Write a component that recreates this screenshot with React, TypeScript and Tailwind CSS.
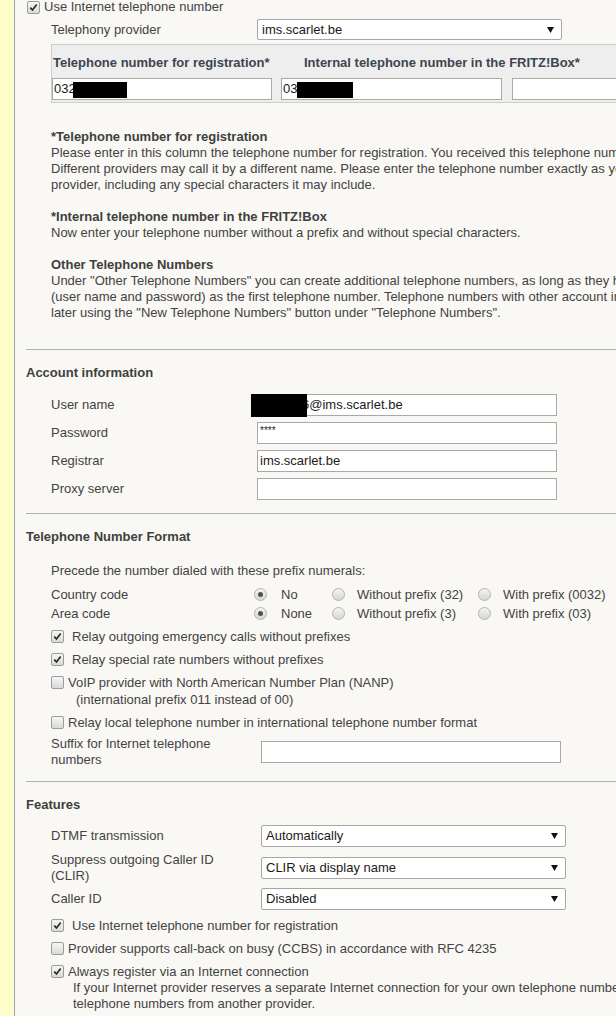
import React from "react";

function Check({ checked }: { checked: boolean }) {
  return (
    <span className="flex w-[13px] h-[13px] shrink-0 items-center justify-center rounded-[2px] border border-[#9c9c9c] bg-linear-to-b from-[#f6f6f6] to-[#d9d9d9]">
      {checked && (
        <svg width="9" height="9" viewBox="0 0 9 9">
          <path d="M1.3 4.6 L3.5 7 L7.7 1.6" stroke="#2a2a2a" strokeWidth="1.7" fill="none" />
        </svg>
      )}
    </span>
  );
}

function Radio({ on }: { on?: boolean }) {
  return (
    <span className="flex w-[13px] h-[13px] shrink-0 items-center justify-center rounded-full border border-[#b4b4b4] bg-linear-to-b from-[#f4f4f4] to-[#d6d6d6]">
      {on && <span className="w-[5px] h-[5px] rounded-full bg-[#505050]" />}
    </span>
  );
}

function Arrow() {
  return (
    <svg width="7" height="6" viewBox="0 0 7 6" className="shrink-0">
      <path d="M0 0 H7 L3.5 6 Z" fill="#111" />
    </svg>
  );
}

function Select({ value, h }: { value: string; h: string }) {
  return (
    <div
      className={`w-[305px] ${h} flex items-center justify-between rounded-[2px] border border-[#a6a6a6] bg-white pl-[4px] pr-[7px] text-[#1a1a1a]`}
    >
      <span>{value}</span>
      <Arrow />
    </div>
  );
}

function CheckRow({
  checked,
  gap,
  children,
}: {
  checked: boolean;
  gap: string;
  children: React.ReactNode;
}) {
  return (
    <div className="ml-[25px] flex items-start py-[3px] leading-[17px]">
      <div className="flex h-[17px] items-center">
        <Check checked={checked} />
      </div>
      <div className={`${gap} leading-[17px]`}>{children}</div>
    </div>
  );
}

export default function App() {
  return (
    <div
      className="flex h-[1016px] w-[616px] overflow-hidden bg-[#f9f8f4] text-[13px] text-[#434343]"
      style={{ fontFamily: '"Liberation Sans", Arial, sans-serif' }}
    >
      <div className="w-[15px] shrink-0 border-r border-[#9aa4ab] bg-[#fefecb]" />
      <div className="w-[820px] shrink-0 pl-[11px]">
        {/* Use Internet telephone number */}
        <div className="ml-[1px] flex h-[14px] items-center gap-[4px]">
          <Check checked />
          <span>Use Internet telephone number</span>
        </div>

        {/* Telephony provider */}
        <div className="ml-[25px] mt-[5px] flex h-[21px] items-center">
          <span className="w-[206px]">Telephony provider</span>
          <Select value="ims.scarlet.be" h="h-[21px]" />
        </div>

        {/* Numbers table */}
        <div className="ml-[25px] mt-[4px] border-b border-l border-t border-[#cdcdcd] bg-[#eeeeee] pb-[2px] pt-[10px]">
          <div className="flex h-[16px] items-center font-bold text-[#3d4550]">
            <span className="w-[252px] pl-[1px]">Telephone number for registration*</span>
            <span>Internal telephone number in the FRITZ!Box*</span>
          </div>
          <div className="mt-[7px] flex h-[22px]">
            <div className="relative flex h-[22px] w-[220px] items-center border border-[#a9a9a9] bg-white pl-[1px] text-[#1a1a1a]">
              032
              <span className="absolute left-[20px] top-[3px] h-[16px] w-[54px] bg-black" />
            </div>
            <div className="relative ml-[9px] flex h-[22px] w-[221px] items-center border border-[#a9a9a9] bg-white pl-[1px] text-[#1a1a1a]">
              03
              <span className="absolute left-[15px] top-[3px] h-[16px] w-[56px] bg-black" />
            </div>
            <div className="ml-[10px] h-[22px] w-[220px] border border-[#a9a9a9] bg-white" />
          </div>
        </div>

        {/* Explanations */}
        <div className="ml-[25px] mt-[26px] leading-[16px] whitespace-nowrap">
          <div className="font-bold text-[#3f3f3f]">*Telephone number for registration</div>
          <div>
            Please enter in this column the telephone number for registration. You received this telephone number from your telephony provider.
          </div>
          <div>
            Different providers may call it by a different name. Please enter the telephone number exactly as you received it from your
          </div>
          <div>provider, including any special characters it may include.</div>
          <div className="mt-[16px] font-bold text-[#3f3f3f]">*Internal telephone number in the FRITZ!Box</div>
          <div>Now enter your telephone number without a prefix and without special characters.</div>
          <div className="mt-[16px] font-bold text-[#3f3f3f]">Other Telephone Numbers</div>
          <div>
            Under "Other Telephone Numbers" you can create additional telephone numbers, as long as they have the same account information
          </div>
          <div>
            (user name and password) as the first telephone number. Telephone numbers with other account information can be configured
          </div>
          <div>later using the "New Telephone Numbers" button under "Telephone Numbers".</div>
        </div>

        <div className="mt-[28px] h-px bg-[#a9b2b8]" />

        {/* Account information */}
        <div className="mt-[15px] font-bold leading-[16px] text-[#3f3f3f]">Account information</div>
        <div className="ml-[25px] mt-[10px]">
          <div className="flex h-[28px] items-center">
            <span className="w-[206px]">User name</span>
            <div className="relative flex h-[22px] w-[300px] items-center border border-[#a9a9a9] bg-white pl-[44px] text-[#1a1a1a]">
              6@ims.scarlet.be
              <span className="absolute left-[-7px] top-[-1px] h-[23px] w-[56px] bg-black" />
            </div>
          </div>
          <div className="flex h-[28px] items-center">
            <span className="w-[206px]">Password</span>
            <div className="h-[22px] w-[300px] border border-[#a9a9a9] bg-white pl-[2px] pt-[3px] text-[10px] leading-[10px] text-[#1a1a1a]">
              ****
            </div>
          </div>
          <div className="flex h-[28px] items-center">
            <span className="w-[206px]">Registrar</span>
            <div className="flex h-[22px] w-[300px] items-center border border-[#a9a9a9] bg-white pl-[2px] text-[#1a1a1a]">
              ims.scarlet.be
            </div>
          </div>
          <div className="flex h-[28px] items-center">
            <span className="w-[206px]">Proxy server</span>
            <div className="h-[22px] w-[300px] border border-[#a9a9a9] bg-white" />
          </div>
        </div>

        <div className="mt-[10px] h-px bg-[#a9b2b8]" />

        {/* Telephone Number Format */}
        <div className="mt-[15px] font-bold leading-[16px] text-[#3f3f3f]">Telephone Number Format</div>
        <div className="ml-[25px] mt-[18px] leading-[16px]">Precede the number dialed with these prefix numerals:</div>
        <div className="mt-[6px]">
          <div className="ml-[25px] flex h-[19px] items-center">
            <span className="w-[203px]">Country code</span>
            <div className="flex w-[78px] items-center gap-[14px]">
              <Radio on />
              <span>No</span>
            </div>
            <div className="flex w-[146px] items-center gap-[12px]">
              <Radio />
              <span>Without prefix (32)</span>
            </div>
            <div className="flex items-center gap-[12px]">
              <Radio />
              <span>With prefix (0032)</span>
            </div>
          </div>
          <div className="ml-[25px] flex h-[19px] items-center">
            <span className="w-[203px]">Area code</span>
            <div className="flex w-[78px] items-center gap-[14px]">
              <Radio on />
              <span>None</span>
            </div>
            <div className="flex w-[146px] items-center gap-[12px]">
              <Radio />
              <span>Without prefix (3)</span>
            </div>
            <div className="flex items-center gap-[12px]">
              <Radio />
              <span>With prefix (03)</span>
            </div>
          </div>
        </div>

        <div className="mt-[2px]">
          <CheckRow checked gap="ml-[8px]">
            Relay outgoing emergency calls without prefixes
          </CheckRow>
          <CheckRow checked gap="ml-[8px]">
            Relay special rate numbers without prefixes
          </CheckRow>
          <CheckRow checked={false} gap="ml-[4px]">
            <div>VoIP provider with North American Number Plan (NANP)</div>
            <div className="pl-[8px]">(international prefix 011 instead of 00)</div>
          </CheckRow>
          <CheckRow checked={false} gap="ml-[4px]">
            Relay local telephone number in international telephone number format
          </CheckRow>
        </div>

        <div className="ml-[25px] mt-[2px] flex items-start">
          <span className="w-[210px] leading-[16px]">
            Suffix for Internet telephone
            <br />
            numbers
          </span>
          <div className="mt-[5px] h-[22px] w-[300px] border border-[#a9a9a9] bg-white" />
        </div>

        <div className="mt-[13px] h-px bg-[#a9b2b8]" />

        {/* Features */}
        <div className="mt-[15px] font-bold leading-[16px] text-[#3f3f3f]">Features</div>
        <div className="ml-[25px] mt-[7px]">
          <div className="flex h-[32px] items-center">
            <span className="w-[210px]">DTMF transmission</span>
            <Select value="Automatically" h="h-[22px]" />
          </div>
          <div className="flex h-[32px] items-center">
            <span className="w-[210px] leading-[16px]">
              Suppress outgoing Caller ID
              <br />
              (CLIR)
            </span>
            <Select value="CLIR via display name" h="h-[22px]" />
          </div>
          <div className="flex h-[30px] items-center">
            <span className="w-[210px]">Caller ID</span>
            <Select value="Disabled" h="h-[22px]" />
          </div>
        </div>

        <CheckRow checked gap="ml-[8px]">
          Use Internet telephone number for registration
        </CheckRow>
        <CheckRow checked={false} gap="ml-[4px]">
          Provider supports call-back on busy (CCBS) in accordance with RFC 4235
        </CheckRow>
        <div className="ml-[25px] flex items-start pt-[3px]">
          <div className="flex h-[17px] items-center">
            <Check checked />
          </div>
          <div className="ml-[4px] whitespace-nowrap">
            <div className="leading-[17px]">Always register via an Internet connection</div>
            <div className="pl-[5px] leading-[16px]">
              If your Internet provider reserves a separate Internet connection for your own telephone numbers, you cannot use these
            </div>
            <div className="pl-[5px] leading-[16px]">telephone numbers from another provider.</div>
          </div>
        </div>
      </div>
    </div>
  );
}
